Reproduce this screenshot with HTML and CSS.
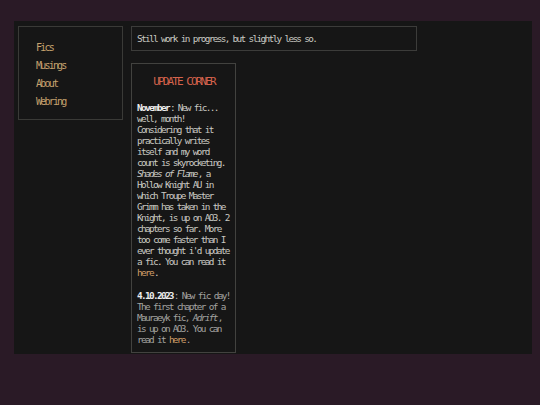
FILE: index.html
```html
<!DOCTYPE html>
<html>
<head>
<meta charset="utf-8">
<link rel="stylesheet" href="styles.css">
</head>
<body>
<div class="page">
  <nav class="nav">
    <a href="#">Fics</a>
    <a href="#">Musings</a>
    <a href="#">About</a>
    <a href="#">Webring</a>
  </nav>
  <main class="content">
    <div class="notice">Still work in progress, but slightly less so.</div>
    <section class="updates">
      <h2 class="title">UPDATE CORNER</h2>
      <p class="entry"><b>November</b>: New fic... well, month! Considering that it practically writes itself and my word count is skyrocketing. <i>Shades of Flame</i>, a Hollow Knight AU in which Troupe Master Grimm has taken in the Knight, is up on AO3. 2 chapters so far. More too come faster than I ever thought i'd update a fic. You can read it <a href="#">here</a>.</p>
      <p class="entry old"><b>4.10.2023</b>: New fic day! The first chapter of a Mauraeyk fic, <i>Adrift</i>, is up on AO3. You can read it <a href="#">here</a>.</p>
    </section>
  </main>
</div>
</body>
</html>
```
FILE: styles.css
```css
html, body {
  margin: 0;
  padding: 0;
  background: #2a1a26;
}
body {
  font-family: "DejaVu Sans Mono", "Liberation Mono", monospace;
  font-size: 9.4px;
  letter-spacing: -1.66px;
  line-height: 11px;
  color: #c9c9c2;
}
.page {
  margin: 21px 0 0 14px;
  width: 518px;
  height: 333px;
  box-sizing: border-box;
  background: #161616;
  padding: 5px 0 0 4px;
  display: flex;
  align-items: flex-start;
  gap: 9px;
}
.nav {
  width: 105px;
  height: 94px;
  box-sizing: border-box;
  border: 1px solid #3a3a37;
  padding: 15px 0 0 17px;
  display: flex;
  flex-direction: column;
  gap: 7px;
}
.nav a {
  color: #c6a26e;
  text-decoration: none;
  font-size: 10px;
  letter-spacing: -1.8px;
}
.content {
  display: flex;
  flex-direction: column;
  align-items: flex-start;
  gap: 12px;
}
.notice {
  width: 286px;
  height: 25px;
  box-sizing: border-box;
  border: 1px solid #3c3c3a;
  padding: 6px 0 0 5px;
  margin-left: -1px;
}
.updates {
  width: 105px;
  margin-left: -1px;
  box-sizing: border-box;
  border: 1px solid #42423f;
  padding: 11px 4px 7px 5px;
}
.title {
  margin: 0 0 13px;
  text-align: center;
  font-weight: normal;
  font-size: 11px;
  line-height: 14px;
  color: #d5634c;
  letter-spacing: -1.9px;
}
.entry {
  margin: 0;
}
.entry + .entry {
  margin-top: 12px;
}
.entry b {
  color: #ececec;
  margin-right: 1px;
}
.entry i {
  margin-right: 1px;
}
.entry a {
  color: #cf9e68;
  text-decoration: none;
  margin-right: 1px;
}
.old {
  color: #a3a3a0;
}
```
